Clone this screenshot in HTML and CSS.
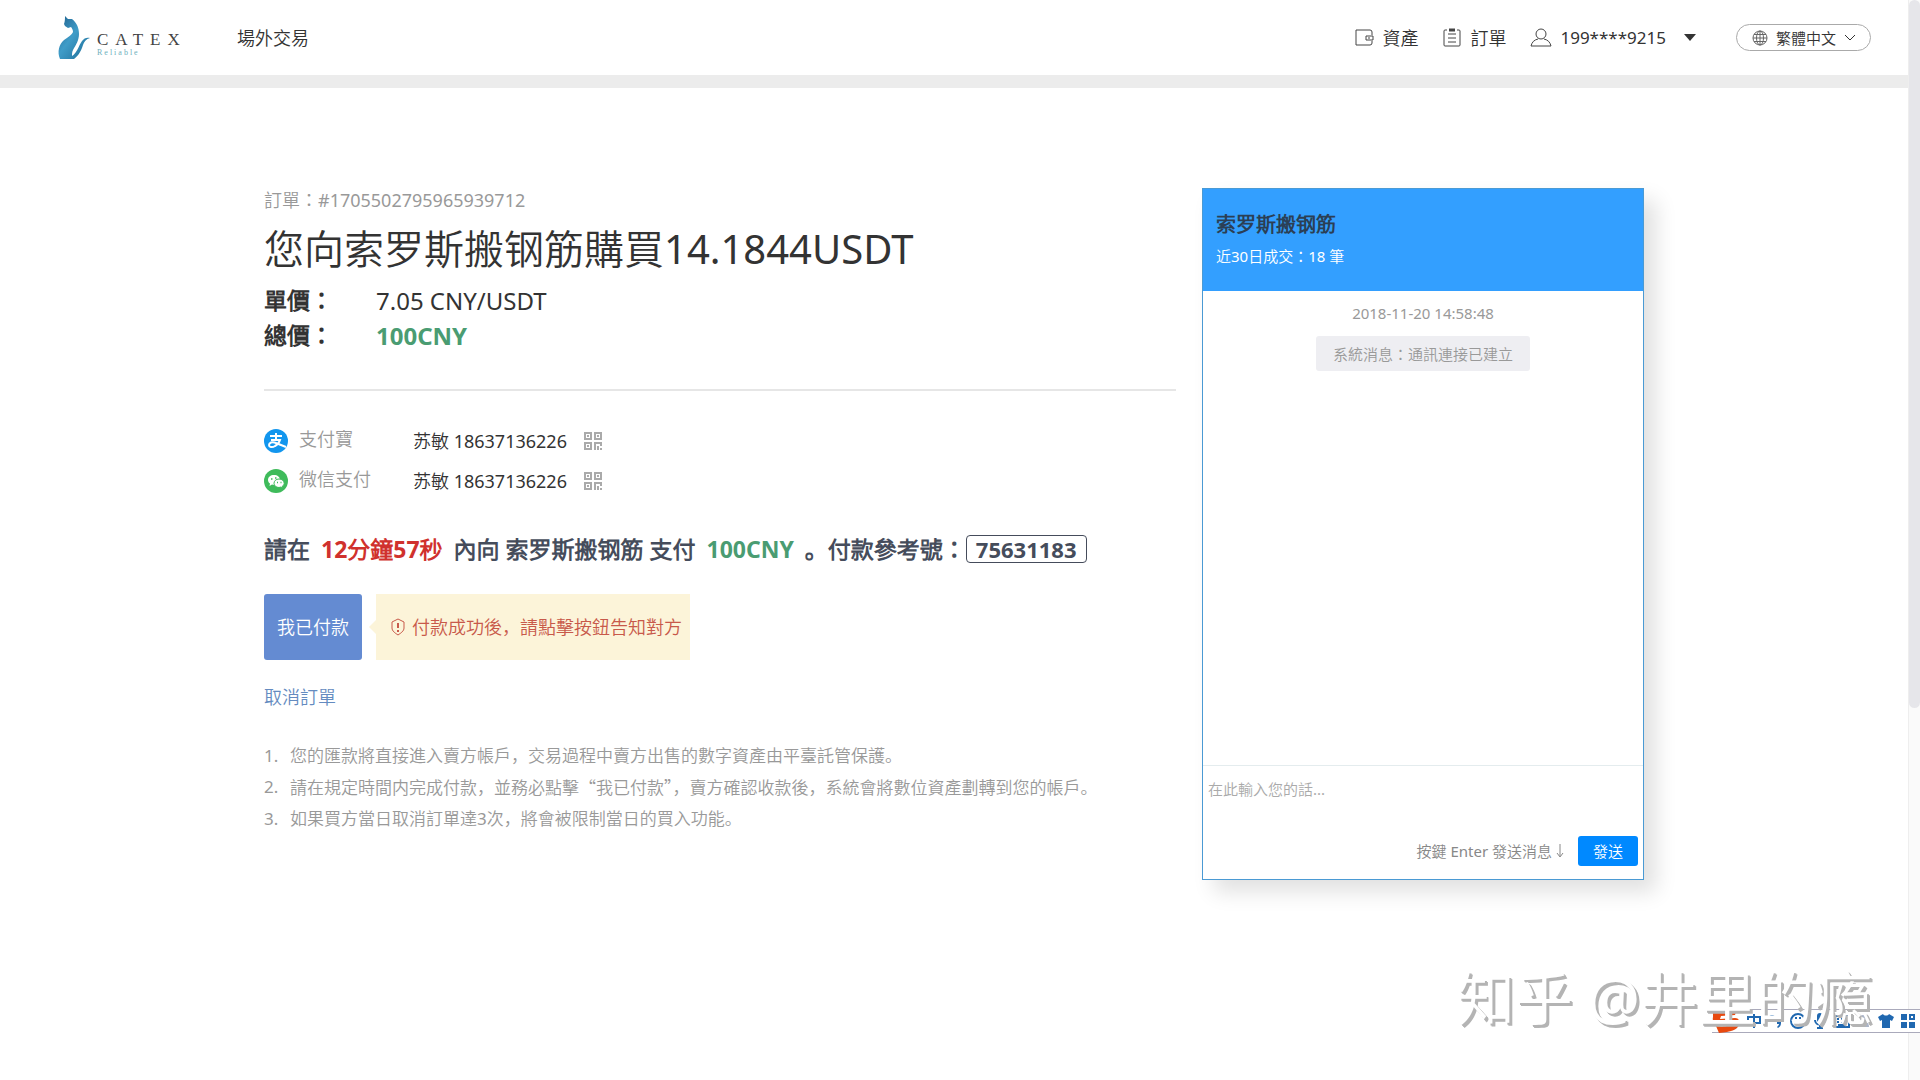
FILE: index.html
```html
<!DOCTYPE html>
<html lang="zh-CN">
<head>
<meta charset="utf-8">
<meta name="viewport" content="width=device-width, initial-scale=1">
<title>CATEX 場外交易</title>
<link rel="stylesheet" href="styles.css">
</head>
<body>
<div class="viewport">
  <div class="page">
    <header class="topbar">
      <a class="logo" href="#">
        <svg class="logo-cat" viewBox="0 0 34 43" aria-hidden="true">
          <defs>
            <linearGradient id="cat" x1="0" y1="0" x2="1" y2="1">
              <stop offset="0" stop-color="#1f5f8c"/>
              <stop offset=".45" stop-color="#3f9cc8"/>
              <stop offset="1" stop-color="#1b6a94"/>
            </linearGradient>
          </defs>
          <path fill="url(#cat)" d="M8 0l3 3 4 0c5 4 7 9 7 15 0 6-3 11-6 16-1 2-1 4-1 6 5-3 7-11 10-15 2-3 5-4 8-3-4 1-6 4-7 7-2 6-4 10-9 14H3c-3-7-1-15 4-19 4-3 8-5 9-8 0-2-1-4-2-5l-3 1-3-2-1-2c1-3 1-5 1-8z"/>
        </svg>
        <span class="logo-text"><span class="logo-name">CATEX</span><span class="logo-tag">Reliable</span></span>
      </a>
      <nav class="nav"><a href="#">場外交易</a></nav>
      <nav class="account">
        <a class="account-link" href="#">
          <svg class="icon" viewBox="0 0 20 20" aria-hidden="true"><path d="M18 7V4a2 2 0 0 0-2-2H2v15h14a2 2 0 0 0 2-2v-2M19 8h-7v4h7zM14 10h2"/></svg>
          資產</a>
        <a class="account-link" href="#">
          <svg class="icon" viewBox="0 0 20 20" aria-hidden="true"><path d="M5 2H3a1 1 0 0 0-1 1v14a1 1 0 0 0 1 1h14a1 1 0 0 0 1-1V3a1 1 0 0 0-1-1h-2M6 6h8M6 10h8M6 14h8"/><path stroke-width="3" d="M7 2h6"/></svg>
          訂單</a>
        <button class="user" type="button">
          <svg class="icon icon-user" viewBox="0 0 22 20" aria-hidden="true"><circle cx="11" cy="6" r="5"/><path d="M8 11c-4 1-6 3-7 7h20c-1-4-3-6-7-7"/></svg>
          <span>199****9215</span>
          <svg class="caret" viewBox="0 0 12 7" aria-hidden="true"><path d="M0 0h12L6 7z"/></svg>
        </button>
        <button class="lang" type="button">
          <svg class="icon-globe" viewBox="0 0 16 16" aria-hidden="true"><circle cx="8" cy="8" r="7"/><ellipse cx="8" cy="8" rx="3.5" ry="7"/><path d="M8 1v14M1 8h14M2 4.500h12M2 11.500h12"/></svg>
          <span>繁體中文</span>
          <svg class="chevron" viewBox="0 0 12 7" aria-hidden="true"><path d="M1 1l5 5 5-5"/></svg>
        </button>
      </nav>
    </header>

    <main class="container">
      <section class="order">
        <p class="order-no">訂單<span lang="zh-TW">：</span>#1705502795965939712</p>
        <h1 class="order-title">您向索罗斯搬钢筋購買14.1844USDT</h1>
        <dl class="prices">
          <dt>單價<span lang="zh-TW">：</span></dt><dd>7.05 CNY/USDT</dd>
          <dt>總價<span lang="zh-TW">：</span></dt><dd class="amount">100CNY</dd>
        </dl>

        <ul class="payments">
          <li class="payment">
            <svg class="pay-icon" viewBox="0 0 24 24" aria-hidden="true"><circle cx="12" cy="12" r="12" fill="#1296ee"/><path fill="none" stroke="#fff" stroke-width="2" d="M6 7h12M12 4v7M7 11h9c-1 3-3 5-5 6-3 2-6 1-6-1s3-4 7-2l10 4"/></svg>
            <span class="pay-name">支付寶</span>
            <span class="pay-account">苏敏 18637136226</span>
            <svg class="qr" viewBox="0 0 18 18" aria-hidden="true"><path d="M1 1h6v6H1zM11 1h6v6h-6zM1 11h6v6H1zM3 4h2M13 4h2M3 14h2M11 18v-7h6v3M14 14v2M13 17h2M16 17h2"/></svg>
          </li>
          <li class="payment">
            <svg class="pay-icon" viewBox="0 0 24 24" aria-hidden="true"><circle cx="12" cy="12" r="12" fill="#3fbb5b"/><path fill="#fff" d="M10 6c-3.500 0-6 2-6 5 0 1.500 1 3 2 3.500L5.500 17l2.500-1.500 2 .5c3.500 0 6-2 6-5s-2.500-5-6-5z"/><path fill="#fff" stroke="#3fbb5b" d="M15 10c-3 0-5 2-5 4.300s2 4.200 5 4.200l2-.5 2 1-.5-2c1-.7 1.700-1.600 1.700-2.700C20.200 12 18 10 15 10z"/><path stroke="#3fbb5b" stroke-width="1.500" d="M7 10h1.500M11 9h1.500M13 13.500h1M16.500 13.500h1"/></svg>
            <span class="pay-name">微信支付</span>
            <span class="pay-account">苏敏 18637136226</span>
            <svg class="qr" viewBox="0 0 18 18" aria-hidden="true"><path d="M1 1h6v6H1zM11 1h6v6h-6zM1 11h6v6H1zM3 4h2M13 4h2M3 14h2M11 18v-7h6v3M14 14v2M13 17h2M16 17h2"/></svg>
          </li>
        </ul>

        <p class="deadline">請在 <strong class="time">12分鐘57秒</strong> 內向 索罗斯搬钢筋 支付 <strong class="sum">100CNY</strong> 。付款參考號<span lang="zh-TW">：</span><span class="ref-code">75631183</span></p>

        <div class="confirm">
          <button class="paid" type="button">我已付款</button>
          <p class="tip">
            <svg class="shield" viewBox="0 0 16 18" aria-hidden="true"><path d="M8 1l6 3v6c0 3-3 5-6 7-3-2-6-4-6-7V4z"/><path stroke-width="2" d="M8 5v5M8 12v2"/></svg>
            付款成功後，請點擊按鈕告知對方</p>
        </div>
        <a class="cancel" href="#">取消訂單</a>

        <ol class="notes">
          <li>您的匯款將直接進入賣方帳戶，交易過程中賣方出售的數字資產由平臺託管保護。</li>
          <li>請在規定時間内完成付款，並務必點擊<span class="quote">“</span>我已付款<span class="quote">”</span>，賣方確認收款後，系統會將數位資產劃轉到您的帳戶。</li>
          <li>如果買方當日取消訂單達3次，將會被限制當日的買入功能。</li>
        </ol>
      </section>

      <aside class="chat">
        <header class="chat-head">
          <h2 class="chat-name">索罗斯搬钢筋</h2>
          <p class="chat-stat">近30日成交<span lang="zh-TW">：</span>18 筆</p>
        </header>
        <div class="chat-log">
          <time class="chat-time">2018-11-20 14:58:48</time>
          <p class="chat-system">系統消息<span lang="zh-TW">：</span>通訊連接已建立</p>
        </div>
        <form class="composer">
          <textarea class="composer-text" aria-label="訊息" placeholder="在此輸入您的話..."></textarea>
          <div class="composer-foot">
            <span class="hint">按鍵 Enter 發送消息<svg class="arrow" viewBox="0 0 8 14" aria-hidden="true"><path d="M4 0v12M1 9l3 4 3-4"/></svg></span>
            <button class="send" type="button">發送</button>
          </div>
        </form>
      </aside>
    </main>
  </div>
  <div class="scrollbar"><div class="scroll-thumb"></div></div>
</div>

<div class="ime">
  <svg class="ime-logo" viewBox="0 0 28 24" aria-hidden="true"><path fill="#e8490f" d="M1 1l24-1-2 6-14 1-1 3 15-1c4 0 5 3 4 7-2 5-8 7-20 8l-3-7c8 1 14 0 15-2l-12 0C2 15 0 12 1 8z"/></svg>
  <svg class="ime-icon" viewBox="0 0 16 16" aria-hidden="true"><path class="line" d="M2 4h12v6H2zM8 1v14"/></svg>
  <svg class="ime-icon" viewBox="0 0 16 16" aria-hidden="true"><circle class="line" cx="4" cy="5" r="2"/><path d="M9 6h4v4c0 2-1 4-3 5l-1-1c1-1 2-2 2-3H9z"/></svg>
  <svg class="ime-icon" viewBox="0 0 16 16" aria-hidden="true"><circle class="line" cx="8" cy="8" r="7"/><path d="M4 9h8c0 5-8 5-8 0zM5 4h2v2H5zM9 4h2v2H9z"/></svg>
  <svg class="ime-icon" viewBox="0 0 16 16" aria-hidden="true"><rect x="5" y="0" width="6" height="10" rx="3"/><path class="line" d="M3 7c0 6 10 6 10 0M8 11v4M5 15h6"/></svg>
  <svg class="ime-icon" viewBox="0 0 16 16" aria-hidden="true"><path class="line" d="M1 3h14v11H1zM3 6h2M7 6h2M11 6h2M3 9h2M7 9h2M11 9h2M4 12h8"/></svg>
  <svg class="ime-icon ime-muted" viewBox="0 0 16 16" aria-hidden="true"><circle cx="7" cy="5" r="3"/><path d="M1 14c0-8 12-8 12 0z"/></svg>
  <svg class="ime-icon" viewBox="0 0 16 16" aria-hidden="true"><path d="M5 1c1 2 5 2 6 0l5 3-2 4-2-1v8H4V7L2 8 0 4z"/></svg>
  <svg class="ime-icon" viewBox="0 0 16 16" aria-hidden="true"><path d="M1 1h6v6H1zM1 9h6v6H1zM9 9h6v6H9z"/><path class="line" d="M10 2h4v4h-4z"/></svg>
</div>
<div class="watermark">知乎 @井里的瘾</div>
</body>
</html>
```

FILE: styles.css
```css
* {
  box-sizing: border-box;
}

body {
  margin: 0;
  background: #fff;
  color: #333;
  font: 400 18px/24px "Noto Sans", "Noto Sans CJK SC DemiLight", "Noto Sans CJK SC", sans-serif;
}

h1, h2, p, ul, ol, dl, dd {
  margin: 0;
  padding: 0;
}

a {
  color: inherit;
  text-decoration: none;
}

button {
  border: 0;
  padding: 0;
  background: none;
  color: inherit;
  font: inherit;
  cursor: pointer;
}

svg {
  display: block;
  flex: none;
}

.viewport {
  display: flex;
  min-height: 100vh;
}

.page {
  flex: 1;
  min-width: 0;
}

.scrollbar {
  width: 12px;
  background: #fafafa;
  border-left: 1px solid #eee;
}

.scroll-thumb {
  height: 708px;
  border-radius: 6px;
  background: #e6e6ea;
}

/* Top bar */
.topbar {
  display: flex;
  align-items: center;
  height: 88px;
  padding: 0 37px 0 57px;
  border-bottom: 13px solid #ececec;
}

.logo {
  display: flex;
  align-items: center;
  gap: 6px;
  width: 180px;
}

.logo-cat {
  width: 34px;
  height: 43px;
}

.logo-text {
  display: flex;
  flex-direction: column;
  padding-top: 14px;
  font-family: "Liberation Serif", serif;
}

.logo-name {
  color: #444;
  font-size: 17px;
  line-height: 16px;
  letter-spacing: 7px;
}

.logo-tag {
  color: #6fb0bd;
  font-size: 8px;
  line-height: 10px;
  letter-spacing: 2px;
}

.account {
  display: flex;
  align-items: center;
  gap: 24px;
  margin-left: auto;
}

.account-link,
.user,
.lang {
  display: flex;
  align-items: center;
}

.account-link {
  gap: 8px;
}

.icon {
  width: 20px;
  height: 20px;
  fill: none;
  stroke: #444;
}

.icon-user {
  width: 22px;
}

.user {
  gap: 8px;
  font-size: 17px;
}

.caret {
  width: 12px;
  height: 7px;
  margin-left: 10px;
  fill: #333;
}

.lang {
  gap: 8px;
  height: 27px;
  margin-left: 16px;
  padding: 0 14px 0 15px;
  border: 1px solid #aaa;
  border-radius: 14px;
  font-size: 15px;
}

.icon-globe {
  width: 16px;
  height: 16px;
  fill: none;
  stroke: #666;
}

.chevron {
  width: 12px;
  height: 7px;
  fill: none;
  stroke: #333;
}

/* Order */
.container {
  display: flex;
  align-items: flex-start;
  gap: 26px;
  max-width: 1380px;
  margin: 100px auto 0;
}

.order {
  flex: 1;
  min-width: 0;
}

.order-no {
  color: #999;
}

.order-title {
  font-size: 40px;
  font-weight: 400;
  line-height: 56px;
  padding-top: 9px;
}

.prices {
  display: grid;
  grid-template-columns: 112px 1fr;
  padding: 6px 0 36px;
  border-bottom: 2px solid #e6e6e6;
  font-size: 23px;
  line-height: 35px;
}

.prices dt {
  font-weight: 700;
}

.prices dd {
  font-size: 24px;
}

.prices .amount {
  color: #4a9c72;
  font-weight: 700;
}

.payments {
  list-style: none;
  padding: 30px 0 0;
}

.payment {
  display: flex;
  align-items: center;
  height: 40px;
}

.pay-icon {
  width: 24px;
  height: 24px;
  margin-right: 11px;
}

.pay-name {
  width: 114px;
  padding-bottom: 4px;
  color: #999;
}

.pay-account {
  color: #333;
}

.qr {
  width: 18px;
  height: 18px;
  margin-left: 17px;
  fill: none;
  stroke: #aaa;
  stroke-width: 2;
}

.deadline {
  padding-top: 31px;
  color: #454c5b;
  font-size: 23px;
  font-weight: 700;
  line-height: 35px;
}

.time,
.sum {
  margin: 0 5px;
  font-weight: 700;
}

.time {
  color: #d0312d;
}

.sum {
  color: #4a9c72;
}

.ref-code {
  display: inline-block;
  padding: 0 9px;
  border: 1px solid #454c5b;
  border-radius: 4px;
  font-size: 22px;
  line-height: 26px;
}

.confirm {
  display: flex;
  gap: 14px;
  padding-top: 27px;
}

.paid {
  width: 98px;
  height: 66px;
  border-radius: 3px;
  background: #648bd2;
  color: #fff;
}

.tip {
  position: relative;
  display: flex;
  align-items: center;
  gap: 6px;
  padding: 0 8px 0 14px;
  background: #fcf4d9;
  color: #c8594a;
}

.tip::before {
  content: "";
  position: absolute;
  top: 26px;
  left: -7px;
  border: 7px solid transparent;
  border-left: 0;
  border-right-color: #fcf4d9;
}

.shield {
  width: 16px;
  height: 18px;
  fill: none;
  stroke: #c8594a;
}

.cancel {
  display: inline-block;
  margin-top: 25px;
  color: #648bc0;
}

.notes {
  padding-top: 31px;
  color: #999;
  font-size: 17px;
  line-height: 31px;
  list-style: none;
  counter-reset: note;
}

.notes li {
  counter-increment: note;
  padding-left: 26px;
}

.notes li::before {
  content: counter(note) ".";
  float: left;
  margin-left: -26px;
}

.quote {
  font-family: "Noto Sans CJK SC", sans-serif;
}

/* Chat */
.chat {
  display: flex;
  flex-direction: column;
  width: 442px;
  border: 1px solid #4a9ad4;
  background: #fff;
  box-shadow: 12px 12px 20px rgba(0, 0, 0, 0.12);
  font-size: 15px;
}

.chat-head {
  padding: 22px 13px 23px;
  background: #339fff;
}

.chat-name {
  color: #2b3f55;
  font-size: 20px;
  line-height: 28px;
}

.chat-stat {
  padding-top: 5px;
  color: #fff;
}

.chat-log {
  display: flex;
  flex-direction: column;
  align-items: center;
  gap: 11px;
  height: 474px;
  padding-top: 10px;
  color: #999;
}

.chat-system {
  padding: 6px 17px 5px;
  border-radius: 3px;
  background: #eeeef2;
}

.composer {
  border-top: 1px solid #e4ecee;
  padding: 11px 5px 13px;
}

.composer-text {
  display: block;
  width: 100%;
  height: 59px;
  padding: 0;
  border: 0;
  outline: 0;
  resize: none;
  color: #333;
  font: inherit;
}

.composer-text::placeholder {
  color: #aaa;
  opacity: 1;
}

.composer-foot {
  display: flex;
  align-items: center;
  justify-content: flex-end;
  gap: 14px;
}

.hint {
  display: flex;
  align-items: center;
  gap: 4px;
  color: #888;
}

.arrow {
  width: 8px;
  height: 14px;
  fill: none;
  stroke: #888;
}

.send {
  width: 60px;
  height: 30px;
  border-radius: 3px;
  background: #0089ff;
  color: #fff;
}

/* Input method bar floating over the window, and the author mark */
.ime {
  position: fixed;
  right: 0;
  bottom: 47px;
  display: flex;
  align-items: center;
  gap: 6px;
  height: 24px;
  padding-right: 4px;
  border: solid #aab;
  border-width: 1px 0;
  background: #fff;
}

.ime-logo {
  width: 28px;
  height: 24px;
}

.ime-icon {
  width: 16px;
  height: 16px;
  fill: #2068b0;
}

.ime-muted {
  fill: #aab4c8;
}

.ime .line {
  fill: none;
  stroke: #2068b0;
  stroke-width: 2;
}

.watermark {
  position: fixed;
  right: 48px;
  bottom: 46px;
  color: #fff;
  font-size: 58px;
  line-height: 72px;
  text-shadow: 2px 2px 0 #b4b4b4, 3px 3px 0 #b4b4b4;
  pointer-events: none;
}
```
